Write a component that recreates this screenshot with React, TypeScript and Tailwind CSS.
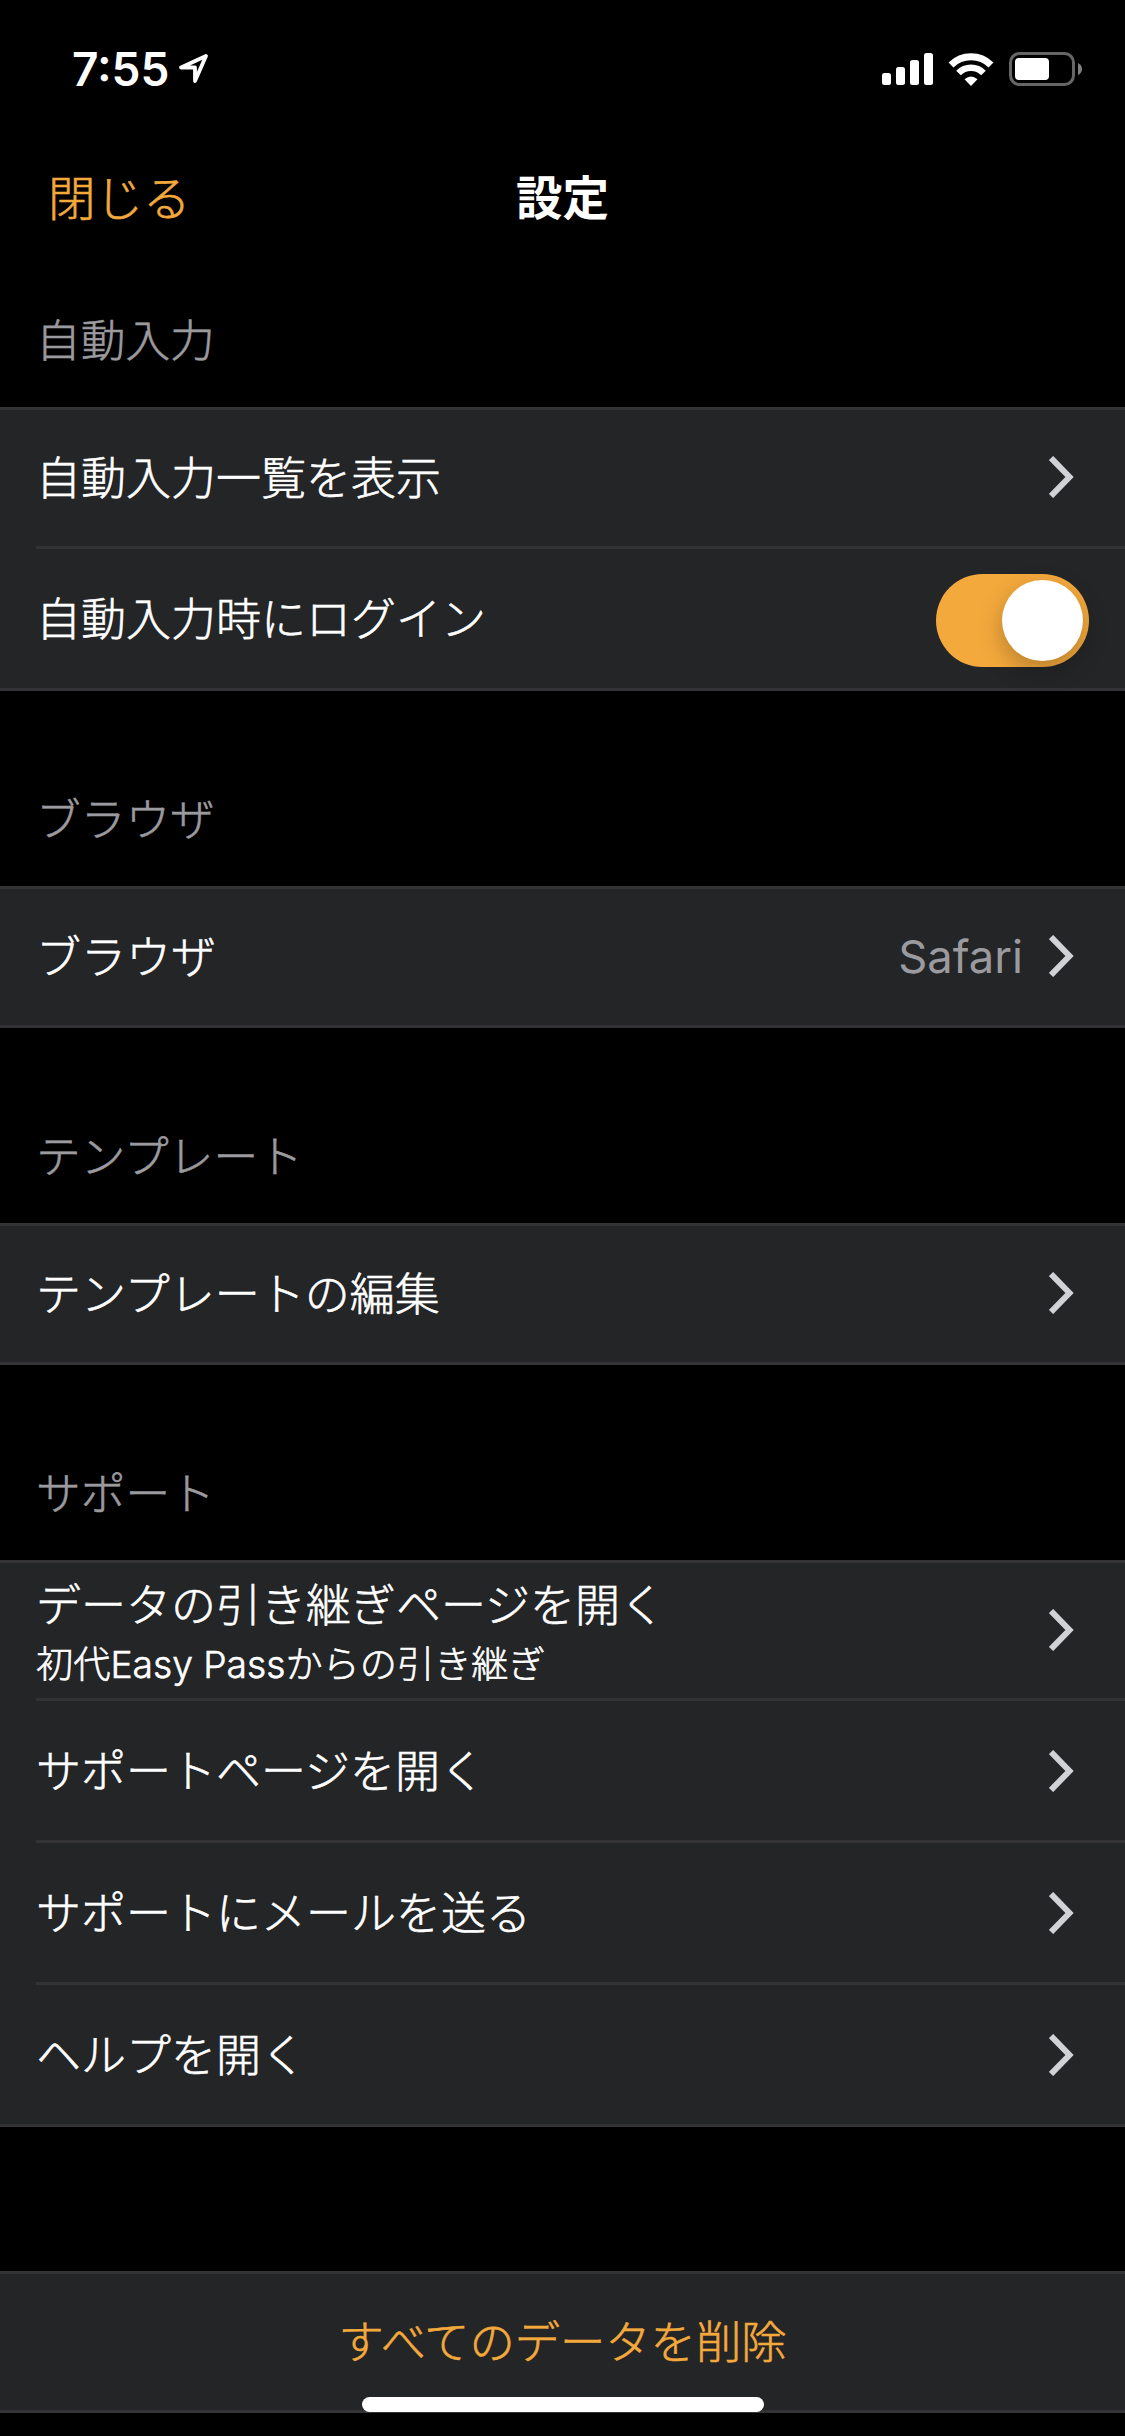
import React from "react";

type RowProps = {
  title: string;
  subtitle?: string;
  value?: string;
  toggle?: boolean;
};

const Chevron = () => (
  <svg width="25" height="42" viewBox="0 0 25 42" fill="none">
    <path d="M2 2L20.5 21L2 40" stroke="#d1d1d6" strokeWidth="6" />
  </svg>
);

const Toggle = () => (
  <div className="flex h-[93px] w-[153px] items-center justify-end rounded-full bg-[#f4a93c] pr-1.5">
    <div className="size-[81px] rounded-full bg-white shadow-[0_9px_24px_rgba(0,0,0,0.25)]" />
  </div>
);

const Row = ({ title, subtitle, value, toggle }: RowProps) => (
  <div className="group pl-9">
    <div
      className={
        subtitle
          ? "flex h-[138px] items-center justify-between border-b-3 border-[#333335] pb-0.5"
          : "flex h-[142px] items-center justify-between border-b-3 border-[#333335] group-first:h-[139px] group-first:pb-0.5 group-last:h-[139px] group-last:border-b-0 group-only:h-[136px]"
      }
    >
      <div className={subtitle ? "pt-2.5" : "pt-[3px]"}>
        <p className="text-[45px] leading-[60px]">{title}</p>
        {subtitle && <p className="text-[37.2px] leading-[57px]">{subtitle}</p>}
      </div>
      {toggle ? (
        <div className="pt-[3px] pr-9">
          <Toggle />
        </div>
      ) : (
        <div className="flex items-center gap-[26px] pr-[51px]">
          {value && (
            <span className="pt-0.5 text-[45.3px] leading-[60px] font-normal text-[#9b9a9f] [-webkit-text-stroke:0]">
              {value}
            </span>
          )}
          <Chevron />
        </div>
      )}
    </div>
  </div>
);

const Section = ({ label, children }: { label: string; children: React.ReactNode }) => (
  <section>
    <h2 className="flex h-[195px] items-end px-9 pb-[36px] text-[44.7px] leading-[60px] text-[#9b9a9f]">
      {label}
    </h2>
    <div className="border-y-3 border-[#333335] bg-[#242527]">{children}</div>
  </section>
);

const StatusBar = () => (
  <div className="flex h-[132px] items-start justify-between pt-[44px] pr-[43px] pl-[72px] text-white [-webkit-text-stroke:0]">
    <div className="flex items-start gap-[9px]">
      <span className="text-[46px] leading-[50px] font-semibold">7:55</span>
      <svg className="mt-[9px]" width="32" height="32" viewBox="0 0 32 32" fill="none">
        <path d="M28 3L3 14.5H17V28Z" stroke="white" strokeWidth="3.8" strokeLinejoin="round" />
      </svg>
    </div>
    <div className="flex items-center pt-2">
      <svg width="51" height="33" viewBox="0 0 51 33" fill="white">
        <rect x="0" y="20" width="9" height="12" rx="2.5" />
        <rect x="14" y="14" width="9" height="18" rx="2.5" />
        <rect x="28" y="7" width="9" height="25" rx="2.5" />
        <rect x="42" y="0" width="9" height="32" rx="2.5" />
      </svg>
      <svg className="ml-[15px]" width="46" height="33" viewBox="0 0 46 33" fill="none" stroke="white">
        <path d="M3 12A28.5 28.5 0 0 1 43 12" strokeWidth="7" />
        <path d="M10.5 20A17.5 17.5 0 0 1 35.5 20" strokeWidth="6.5" />
        <path d="M23 33L16.5 26.3Q23 20.5 29.5 26.3Z" fill="white" stroke="none" />
      </svg>
      <svg className="ml-[15px]" width="73" height="34" viewBox="0 0 73 34" fill="none">
        <rect x="1.5" y="1.5" width="63" height="31" rx="9" stroke="#666" strokeWidth="3" />
        <rect x="6" y="6" width="34" height="22" rx="4" fill="white" />
        <path d="M69 11Q73 13 73 17T69 23Z" fill="#808080" />
      </svg>
    </div>
  </div>
);

const App = () => {
  return (
    <div className="relative h-[2436px] w-[1125px] overflow-hidden bg-black font-['Inter','Noto_Sans_CJK_JP',sans-serif] font-light text-white [-webkit-text-stroke:0.6px]">
      <StatusBar />
      <header className="grid h-[133px] grid-cols-3 items-center px-12">
        <button className="text-left text-[47.5px] text-[#f4a93c]">閉じる</button>
        <h1 className="text-center text-[46.5px] font-bold [-webkit-text-stroke:0]">設定</h1>
      </header>
      <main className="-mt-[53px]">
        <Section label="自動入力">
          <Row title="自動入力一覧を表示" />
          <Row title="自動入力時にログイン" toggle />
        </Section>
        <Section label="ブラウザ">
          <Row title="ブラウザ" value="Safari" />
        </Section>
        <Section label="テンプレート">
          <Row title="テンプレートの編集" />
        </Section>
        <Section label="サポート">
          <Row title="データの引き継ぎページを開く" subtitle="初代Easy Passからの引き継ぎ" />
          <Row title="サポートページを開く" />
          <Row title="サポートにメールを送る" />
          <Row title="ヘルプを開く" />
        </Section>
        <button className="mt-[144px] flex h-[142px] w-full items-center justify-center border-y-3 border-[#333335] bg-[#242527] pt-0.5 text-[45.3px] text-[#f4a93c]">
          すべてのデータを削除
        </button>
      </main>
      {/* home indicator */}
      <div className="absolute bottom-6 left-[362px] h-[15px] w-[402px] rounded-full bg-white" />
    </div>
  );
};

export default App;
